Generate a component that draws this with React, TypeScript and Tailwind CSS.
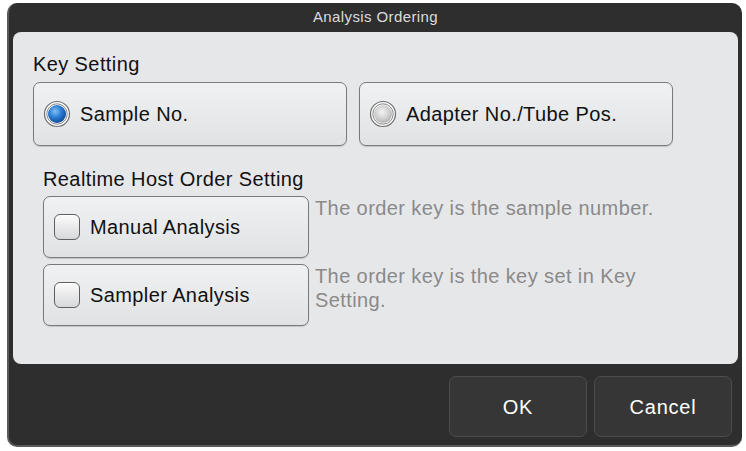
import { useState } from "react";

const FONT = { fontFamily: '"Liberation Sans", Arial, sans-serif' };

function Radio({ checked }: { checked: boolean }) {
    return (
        <svg width="28" height="28" viewBox="0 0 28 28">
            <defs>
                <radialGradient id="rb" cx="40%" cy="35%" r="65%">
                    <stop offset="0%" stopColor="#7ec0f5" />
                    <stop offset="55%" stopColor="#2a7bd1" />
                    <stop offset="100%" stopColor="#0f4f9c" />
                </radialGradient>
                <radialGradient id="rg" cx="45%" cy="40%" r="65%">
                    <stop offset="0%" stopColor="#f4f4f4" />
                    <stop offset="60%" stopColor="#cfcfcf" />
                    <stop offset="100%" stopColor="#a8a8a8" />
                </radialGradient>
            </defs>
            <circle cx="14" cy="14" r="12.5" fill="#fafafa" stroke="#6f6f6f" strokeWidth="1.2" />
            <circle cx="14" cy="14" r="10.2" fill="none" stroke="#8a8a8a" strokeWidth="1" />
            <circle cx="14" cy="14" r="9" fill={checked ? "url(#rb)" : "url(#rg)"} />
        </svg>
    );
}

function Check() {
    return (
        <span className="w-[26px] h-[26px] shrink-0 rounded-[6px] border border-[#5f5f5f] bg-gradient-to-b from-[#fbfbfb] to-[#d8d9db] shadow-[inset_0_1px_0_#fff]" />
    );
}

const keyOptions = ["Sample No.", "Adapter No./Tube Pos."];
const hostOptions = [
    { label: "Manual Analysis", desc: "The order key is the sample number." },
    { label: "Sampler Analysis", desc: "The order key is the key set in Key Setting." },
];

export default function App() {
    const [key, setKey] = useState(0);

    return (
        <div className="w-[746px] h-[451px] bg-white pt-[3px] pl-[7px]" style={FONT}>
            <div className="w-[735px] h-[444px] bg-[#2f2e2f] rounded-[10px] border-l-2 border-b-2 border-[#5a5a5a] flex flex-col px-[4px]">
                {/* title bar */}
                <div className="h-[29px] flex items-center justify-center text-[15px] tracking-[0.4px] text-[#dcdcdc]">
                    Analysis Ordering
                </div>
                {/* body panel */}
                <div className="h-[332px] bg-[#e6e7e9] rounded-[8px] pl-[20px] pt-[21px] flex flex-col text-[20px] tracking-[0.4px]">
                    <div className="text-[#111] leading-[22px]">Key Setting</div>
                    <div className="flex gap-[12px] mt-[7px]">
                        {keyOptions.map((o, i) => (
                            <button
                                key={o}
                                onClick={() => setKey(i)}
                                className="w-[314px] h-[64px] rounded-[7px] border border-[#7a7a7a] bg-gradient-to-b from-[#f0f1f2] to-[#e0e2e4] shadow-[0_1px_1px_rgba(0,0,0,0.15)] flex items-center gap-[9px] pl-[9px] text-[#111]"
                            >
                                <Radio checked={key === i} />
                                <span>{o}</span>
                            </button>
                        ))}
                    </div>
                    <div className="text-[#111] leading-[22px] mt-[22px] ml-[10px]">Realtime Host Order Setting</div>
                    <div className="flex flex-col gap-[6px] mt-[6px] ml-[10px]">
                        {hostOptions.map((h) => (
                            <div key={h.label} className="flex gap-[6px]">
                                <button className="w-[266px] h-[62px] shrink-0 rounded-[7px] border border-[#7a7a7a] bg-gradient-to-b from-[#f0f1f2] to-[#e0e2e4] shadow-[0_1px_1px_rgba(0,0,0,0.15)] flex items-center gap-[10px] pl-[10px] text-[#111]">
                                    <Check />
                                    <span>{h.label}</span>
                                </button>
                                <div className="w-[345px] leading-[24px] text-[#8a8a8a]">{h.desc}</div>
                            </div>
                        ))}
                    </div>
                </div>
                {/* footer */}
                <div className="flex justify-end gap-[7px] pt-[12px] pr-[6px]">
                    {["OK", "Cancel"].map((b) => (
                        <button
                            key={b}
                            className="w-[138px] h-[61px] rounded-[7px] border border-[#4c4c4c] bg-[#363636] text-white text-[20px] tracking-[0.8px]"
                        >
                            {b}
                        </button>
                    ))}
                </div>
            </div>
        </div>
    );
}
